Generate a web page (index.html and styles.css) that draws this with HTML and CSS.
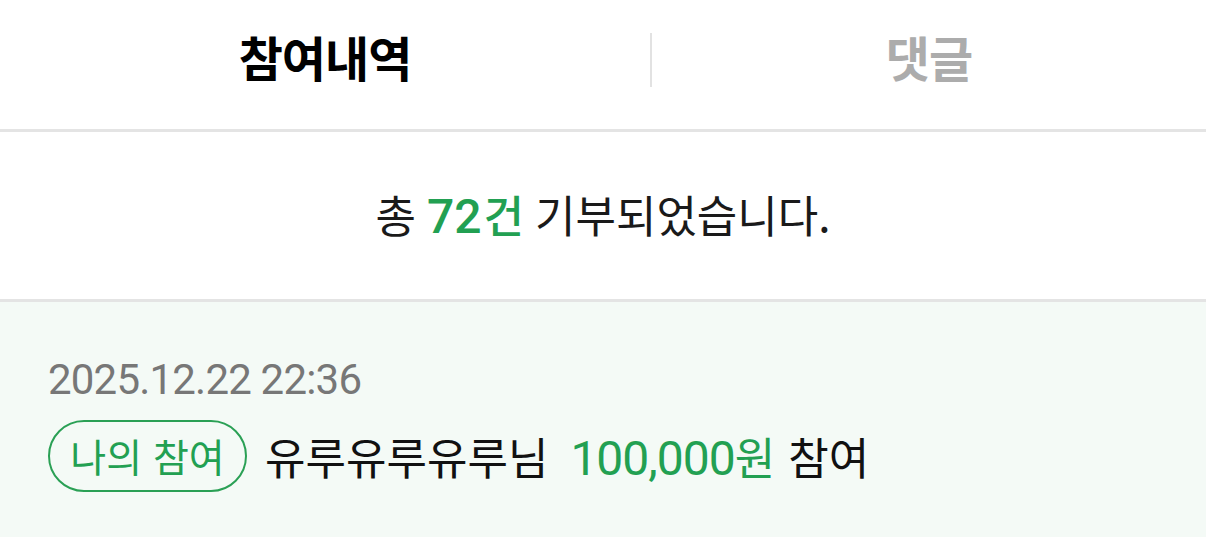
FILE: index.html
```html
<!DOCTYPE html>
<html lang="ko">
<head>
<meta charset="utf-8">
<link rel="stylesheet" href="styles.css">
</head>
<body>
<div class="tabs">
  <div class="tab tab-active"><span class="tab-label">참여내역</span></div>
  <div class="divider"></div>
  <div class="tab tab-inactive"><span class="tab-label">댓글</span></div>
</div>
<div class="summary">
  <span class="kr">총</span>
  <span class="green count"><span class="num">72</span><span class="kr">건</span></span>
  <span class="kr">기부되었습니다.</span>
</div>
<div class="item">
  <div class="date">2025.12.22 22:36</div>
  <div class="line">
    <span class="badge">나의 참여</span>
    <span class="name nickname">유루유루유루님</span>
    <span class="amount green"><span class="num">100,000</span><span class="kr">원</span></span>
    <span class="name">참여</span>
  </div>
</div>
</body>
</html>
```
FILE: styles.css
```css
* { box-sizing: border-box; }
html, body { margin: 0; padding: 0; background: #fff; }
body {
  font-family: "Noto Sans CJK KR", "Noto Sans", sans-serif;
  color: #1a1a1a;
  width: 1206px;
  height: 537px;
  overflow: hidden;
}
.tabs {
  display: flex;
  align-items: center;
  height: 132px;
  padding-bottom: 9px;
  border-bottom: 3px solid #e4e4e4;
}
.tab {
  display: flex;
  justify-content: center;
  align-items: center;
  font-size: 48px;
  font-weight: 700;
  line-height: 1;
}
.tab-label { padding-bottom: 9px; letter-spacing: -1px; }
.tab-active { width: 650px; color: #000; }
.tab-inactive { flex: 1; color: #acacac; }
.divider {
  width: 2px;
  height: 54px;
  background: #e2e2e2;
}
.summary {
  height: 170px;
  display: flex;
  justify-content: center;
  align-items: baseline;
  padding-top: 52px;
  gap: 11px;
  font-size: 44px;
  line-height: 60px;
  color: #1a1a1a;
  border-bottom: 3px solid #e4e4e4;
}
.num {
  font-family: Roboto, "Noto Sans", sans-serif;
}
.count { font-weight: 500; }
.summary .num { font-size: 48px; margin-right: 2px; }
.green { color: #22a052; }
.item {
  background: #f4faf6;
  height: 238px;
  padding: 57px 0 0 48px;
}
.date {
  font-family: Roboto, "Noto Sans", sans-serif;
  font-size: 42px;
  line-height: 42px;
  color: #777;
  letter-spacing: -0.8px;
}
.line {
  display: flex;
  align-items: center;
  margin-top: 19px;
  font-size: 44px;
  height: 72px;
}
.badge {
  display: inline-flex;
  align-items: center;
  justify-content: center;
  height: 72px;
  width: 199px;
  border: 2px solid #2aa055;
  border-radius: 36px;
  color: #22a052;
  font-size: 39px;
  line-height: 1;
  padding-bottom: 2px;
  margin-right: 18px;
}
.name { color: #111; }
.nickname { margin-right: 22px; }
.amount { margin-right: 13px; display: inline-flex; align-items: baseline; }
.amount .num { font-size: 48px; letter-spacing: -1px; }
```
